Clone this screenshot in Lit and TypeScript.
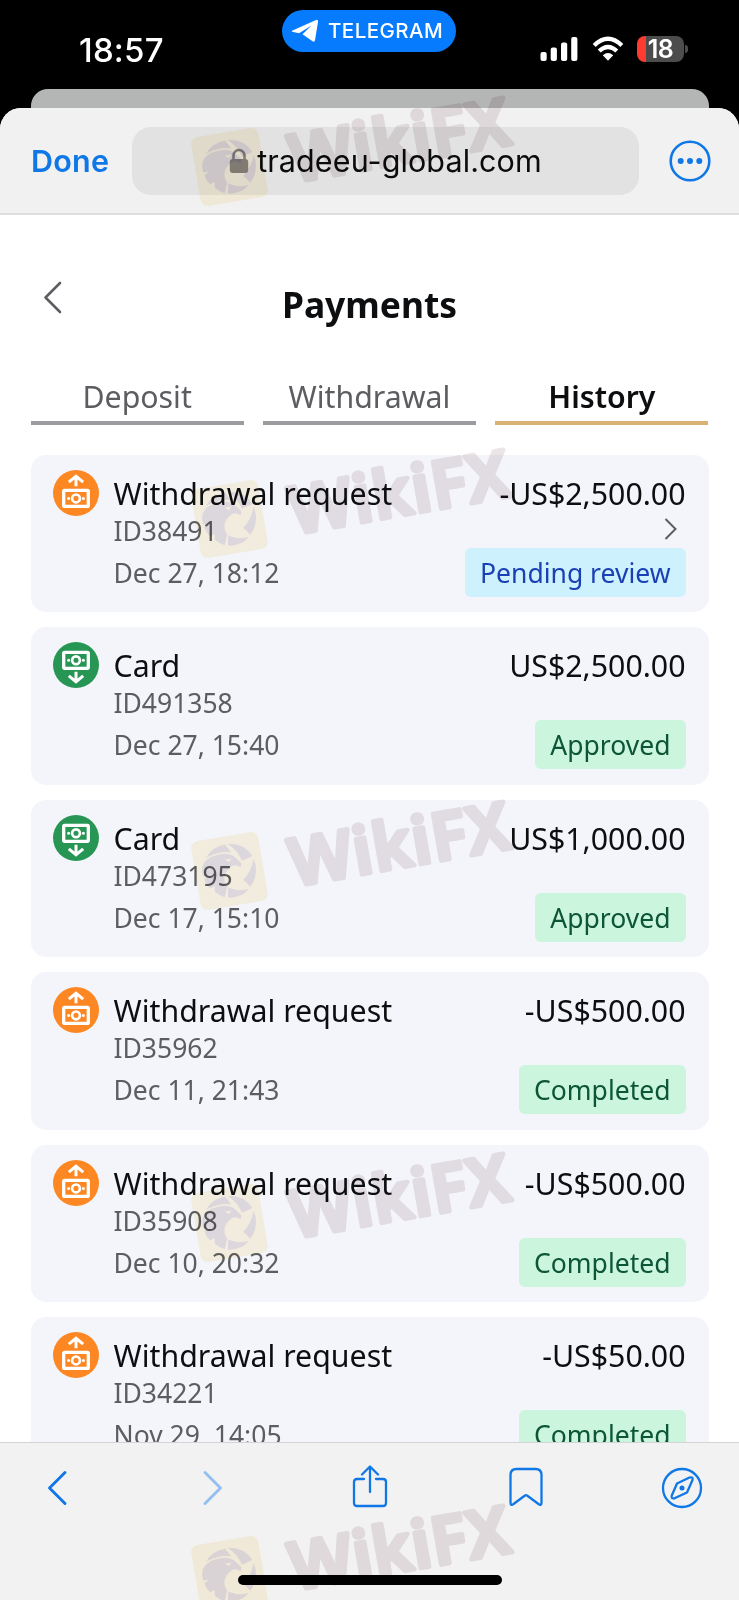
import { LitElement, html, css, svg } from "lit";
import { customElement, property } from "lit/decorators.js";
import { classMap } from "lit/directives/class-map.js";

interface Payment {
  kind: "out" | "in";
  title: string;
  id: string;
  date: string;
  amount: string;
  status: string;
  tone: "info" | "ok";
  more?: boolean;
}

const PAYMENTS: Payment[] = [
  { kind: "out", title: "Withdrawal request", id: "ID38491", date: "Dec 27, 18:12", amount: "-US$2,500.00", status: "Pending review", tone: "info", more: true },
  { kind: "in", title: "Card", id: "ID491358", date: "Dec 27, 15:40", amount: "US$2,500.00", status: "Approved", tone: "ok" },
  { kind: "in", title: "Card", id: "ID473195", date: "Dec 17, 15:10", amount: "US$1,000.00", status: "Approved", tone: "ok" },
  { kind: "out", title: "Withdrawal request", id: "ID35962", date: "Dec 11, 21:43", amount: "-US$500.00", status: "Completed", tone: "ok" },
  { kind: "out", title: "Withdrawal request", id: "ID35908", date: "Dec 10, 20:32", amount: "-US$500.00", status: "Completed", tone: "ok" },
  { kind: "out", title: "Withdrawal request", id: "ID34221", date: "Nov 29, 14:05", amount: "-US$50.00", status: "Completed", tone: "ok" },
];

const note = svg`
  <rect x="10.7" y="20.4" width="24.6" height="16" rx="1" fill="none" stroke="#fff" stroke-width="3.3"/>
  <circle cx="23" cy="28.4" r="3.9" fill="none" stroke="#fff" stroke-width="2.7"/>
  <circle cx="15.6" cy="28.4" r="1.5" fill="#fff"/><circle cx="30.4" cy="28.4" r="1.5" fill="#fff"/>`;

@customElement("payment-card")
class PaymentCard extends LitElement {
  @property({ attribute: false }) item!: Payment;
  static styles = css`
    :host { display: flex; flex: none; box-sizing: border-box; height: 157.2px; padding: 15px 23px 15px 22px; background: #f4f5fa; border-radius: 15px; gap: 15px; }
    .icon { width: 46px; height: 46px; flex: none; }
    .body { flex: 1; }
    .row { display: flex; justify-content: space-between; color: #5c5d60; font-size: 26.5px; }
    .head { height: 44px; line-height: 47px; font-size: 30.3px; color: #0d0e10; }
    .mid { height: 31.5px; line-height: 34.500px; }
    .foot { height: 49px; margin-top: 2.5px; line-height: 50px; }
    .badge { padding: 0 15px; border-radius: 6px; background: #cbf5dd; color: #0c5535; height: 49px; line-height: 50px; }
    .badge.info { background: #cdf2fd; color: #1b40b5; }
    .chev { margin: 3px 7px 0 0; width: 16px; height: 24px; }
  `;
  render() {
    const p = this.item;
    return html`
      <svg class="icon" viewBox="0 0 46 46">
        <circle cx="23" cy="23" r="23" fill=${p.kind === "out" ? "#fd8723" : "#279654"} />
        ${p.kind === "out"
          ? svg`${note}<path d="M23 16.300V6.500M15.800 12.200L23 6.300L30.200 12.200" fill="none" stroke="#fff" stroke-width="3"/>`
          : svg`<g transform="translate(0 -10.1)">${note}</g><path d="M23 29.800V39.600M15.800 33.800L23 39.700L30.200 33.800" fill="none" stroke="#fff" stroke-width="3"/>`}
      </svg>
      <div class="body">
        <div class="row head"><span>${p.title}</span><span>${p.amount}</span></div>
        <div class="row mid">
          <span>${p.id}</span>
          ${p.more ? html`<svg class="chev" viewBox="0 0 16 24"><path d="M2.500 2l10 10L2.500 22" fill="none" stroke="#5c5d60" stroke-width="2"/></svg>` : ""}
        </div>
        <div class="row foot"><span>${p.date}</span><span class=${classMap({ badge: true, info: p.tone === "info" })}>${p.status}</span></div>
      </div>`;
  }
}

@customElement("wiki-watermark")
class WikiWatermark extends LitElement {
  static styles = css`
    :host { position: absolute; inset: 0; pointer-events: none; mix-blend-mode: multiply; overflow: hidden; }
    svg { display: block; }
    .word { font-family: "Noto Sans", sans-serif; font-weight: 600; font-size: 66px; }
  `;
  render() {
    return html`<svg width="739" height="1600" viewBox="0 0 739 1600">
      ${[0, 1, 2, 3, 4].map((i) => svg`
        <g transform="translate(0 ${i * 352})">
          <g transform="translate(229.5 167) rotate(-9.6)">
            <rect x="-34" y="-35" width="68" height="70" rx="7" fill="#fdf6e4"/>
            <g fill="#e6dfe2">
              <path d="M-21-17Q-13-27 0-27L5-18Q-6-22-21-17Z"/>
              <path d="M3-27Q19-25 25-11L14-8Q12-18 3-27Z"/>
              <path d="M26-8Q29 8 18 19L12 11Q21 5 26-8Z"/>
              <path d="M16 21Q7 29-6 26L-4 16Q5 22 16 21Z"/>
              <path d="M-27-4Q-26-17-8-18Q4-19 9-11L13-6L12-2L6-5Q-2-3-5 3Q-8 9-5 15L-9 25Q-15 22-18 18L-17 12L-22 14Q-26 8-26 4L-21 1L-27 1Z"/>
            </g>
            <path d="M-3-12L4-12L1-9Z" fill="#fdf6e4"/>
          </g>
          <text class="word" transform="translate(294 182.4) rotate(-10)" textLength="222" lengthAdjust="spacing" fill="#ebe5e7" stroke="#ebe5e7" stroke-width="4.5" stroke-linejoin="round">WikiFX</text>
        </g>`)}
    </svg>`;
  }
}

@customElement("app-root")
class AppRoot extends LitElement {
  static styles = css`
    :host { position: relative; display: flex; flex-direction: column; width: 739px; height: 1600px; overflow: hidden; background: #000; font-family: "Noto Sans", sans-serif; isolation: isolate; }
    svg { display: block; flex: none; }
    .status { display: grid; grid-template-columns: 282px 174px 1fr; height: 89px; flex: none; font-family: Inter, sans-serif; color: #fff; }
    .time { padding: 30px 0 0 79px; font-size: 33px; line-height: 41px; font-weight: 500; letter-spacing: 0.2px; }
    .pill { display: flex; align-items: center; box-sizing: border-box; height: 41.5px; margin-top: 10px; padding-left: 9px; gap: 9px; border-radius: 21px; background: #067bfe; font-size: 20.5px; font-weight: 500; letter-spacing: 0.45px; }
    .signals { display: flex; align-items: center; height: 26px; margin: 36px 0 0 84px; }
    .wifi { margin: 0 13.5px; }
    .battery { display: flex; justify-content: center; align-items: center; width: 47px; height: 26px; border-radius: 8px; background: linear-gradient(90deg, #fd3b30 9px, #4c4c4c 9px); font-size: 25px; font-weight: 600; letter-spacing: -0.6px; }
    .cap { width: 3px; height: 8px; margin-left: 1px; border-radius: 0 4px 4px 0; background: #4c4c4c; }
    .behind { height: 19px; flex: none; margin: 0 30.5px; border-radius: 17px 17px 0 0; background: #b4b5b5; }
    .sheet { flex: 1; display: flex; flex-direction: column; min-height: 0; border-radius: 21px 21px 0 0; background: #fff; overflow: hidden; }
    .bar { display: flex; align-items: center; box-sizing: border-box; height: 107px; flex: none; padding: 0 28.5px 0 31px; background: #f1f1f1; border-bottom: 2px solid #dededf; font-family: Inter, sans-serif; font-size: 30.5px; }
    .done { width: 101px; color: #1077e6; font-weight: 600; letter-spacing: 0.25px; }
    .url { display: flex; align-items: center; justify-content: center; box-sizing: border-box; width: 507px; height: 68px; border-radius: 19px; background: #e2e2e2; gap: 8px; color: #0b0b0b; padding: 0 22px; white-space: nowrap; letter-spacing: 0.1px; }
    .dots { margin-left: auto; }
    .page { flex: 1; min-height: 0; overflow: hidden; padding: 0 30.5px; display: flex; flex-direction: column; }
    .titlebar { display: grid; grid-template-columns: 60px 1fr 60px; height: 142px; flex: none; }
    .back { margin: 64px 0 0 11.5px; }
    h1 { margin: 65px 0 0; text-align: center; font-size: 35.4px; line-height: 48px; color: #0d0e10; font-weight: 700; }
    .tabs { display: grid; grid-template-columns: repeat(3, 1fr); gap: 19px; flex: none; }
    .tab { height: 64px; line-height: 80px; text-align: center; font-size: 30.3px; color: #5c5d60; border-bottom: 4px solid #9c9ca0; }
    .tab.active { color: #0d0e10; font-weight: 600; border-color: #d9b274; }
    .list { display: flex; flex-direction: column; gap: 15.3px; padding-top: 30px; }
    .tools { position: relative; display: grid; grid-template-columns: repeat(5, 42px); column-gap: 114.25px; justify-items: center; align-items: start; box-sizing: border-box; height: 158px; flex: none; padding: 22px 0 0 36px; background: #f2f2f2; border-top: 1px solid #d4d4d7; }
    .home { position: absolute; left: 238px; bottom: 15px; width: 264px; height: 10px; border-radius: 5px; background: #000; }
  `;
  render() {
    return html`
      <div class="status">
        <div class="time">18:57</div>
        <div class="pill">
          <svg width="28" height="24" viewBox="0 0 28 24"><path d="M1 11.8L24.5 1.2Q27.4 0 27 3L24 21.2Q23.5 23.6 21.2 22L11.5 15.2L20.5 6.5L8 14.2L1.2 12.7Q.2 12.3 1 11.8Z" fill="#fff"/></svg>
          <span>TELEGRAM</span>
        </div>
        <div class="signals">
          <svg width="38" height="26" viewBox="0 0 38 26" fill="#fff"><rect x=".5" y="16" width="6.2" height="9" rx="2"/><rect x="10.7" y="11.5" width="6.2" height="13.5" rx="2"/><rect x="21" y="6.5" width="6.2" height="18.5" rx="2"/><rect x="31.2" y="1" width="6.2" height="24" rx="2"/></svg>
          <svg class="wifi" width="32" height="26" viewBox="0 0 32 26"><path d="M2.2 9.5Q16-3.8 29.8 9.5M7.2 15Q16 6.8 24.8 15" fill="none" stroke="#fff" stroke-width="4.3"/><path d="M10.8 19.2Q16 14.8 21.2 19.2L16 24.8Z" fill="#fff"/></svg>
          <div class="battery">18</div><div class="cap"></div>
        </div>
      </div>
      <div class="behind"></div>
      <div class="sheet">
        <div class="bar">
          <span class="done">Done</span>
          <div class="url">
            <svg width="20" height="26" viewBox="0 0 20 26"><rect x=".8" y="11" width="18.4" height="14" rx="3" fill="#808080"/><path d="M4.5 12V7.5a5.5 5.5 0 0 1 11 0V12" fill="none" stroke="#808080" stroke-width="2.6"/></svg>
            <span>tradeeu-global.com</span>
          </div>
          <svg class="dots" width="42" height="42" viewBox="0 0 42 42"><circle cx="21" cy="21" r="19.3" fill="none" stroke="#1077e6" stroke-width="2.6"/><g fill="#1077e6"><circle cx="11.7" cy="21" r="3"/><circle cx="21" cy="21" r="3"/><circle cx="30.3" cy="21" r="3"/></g></svg>
        </div>
        <div class="page">
          <div class="titlebar">
            <svg class="back" width="22" height="36" viewBox="0 0 22 36"><path d="M18 4L3.5 18.5L18 33" fill="none" stroke="#5c5d60" stroke-width="2.6" stroke-linecap="round" stroke-linejoin="round"/></svg>
            <h1>Payments</h1>
          </div>
          <div class="tabs">
            <div class="tab">Deposit</div><div class="tab">Withdrawal</div><div class="tab active">History</div>
          </div>
          <div class="list">${PAYMENTS.map((p) => html`<payment-card .item=${p}></payment-card>`)}</div>
        </div>
        <div class="tools">
          <svg width="24" height="44" viewBox="0 0 24 44"><path d="M20 7.5L4.5 23L20 38.5" fill="none" stroke="#1077e6" stroke-width="2.9" stroke-linecap="round" stroke-linejoin="round"/></svg>
          <svg width="24" height="44" viewBox="0 0 24 44"><path d="M4 7.5L19.5 23L4 38.5" fill="none" stroke="#94bff0" stroke-width="2.9" stroke-linecap="round" stroke-linejoin="round"/></svg>
          <svg width="36" height="44" viewBox="0 0 36 44" fill="none" stroke="#1077e6" stroke-width="2.3" stroke-linecap="round" stroke-linejoin="round"><path d="M12 14H5Q2 14 2 17V38Q2 41 5 41H31Q34 41 34 38V17Q34 14 31 14H24M18 27V2M10 9.5L18 1.5L26 9.5"/></svg>
          <svg width="36" height="44" viewBox="0 0 36 44" fill="none" stroke="#1077e6" stroke-width="2.3" stroke-linejoin="round"><path d="M2.5 10Q2.5 4 8.5 4H27.5Q33.5 4 33.5 10V37.5Q33.5 41 30.5 39L19 30.5Q18 29.8 17 30.5L5.500 39Q2.500 41 2.500 37.500Z"/></svg>
          <svg width="42" height="44" viewBox="0 0 42 44" fill="none" stroke="#1077e6" stroke-width="2.3" stroke-linejoin="round"><circle cx="21" cy="23" r="19"/><path d="M16 18.5L28.5 12.5Q32.5 11.5 31.5 15L26 27.5L13.5 33.3Q9.800 34.200 10.800 30.500Z"/><circle cx="21" cy="23" r="2.500" fill="#1077e6" stroke="none"/></svg>
          <div class="home"></div>
        </div>
      </div>
      <wiki-watermark></wiki-watermark>`;
  }
}
